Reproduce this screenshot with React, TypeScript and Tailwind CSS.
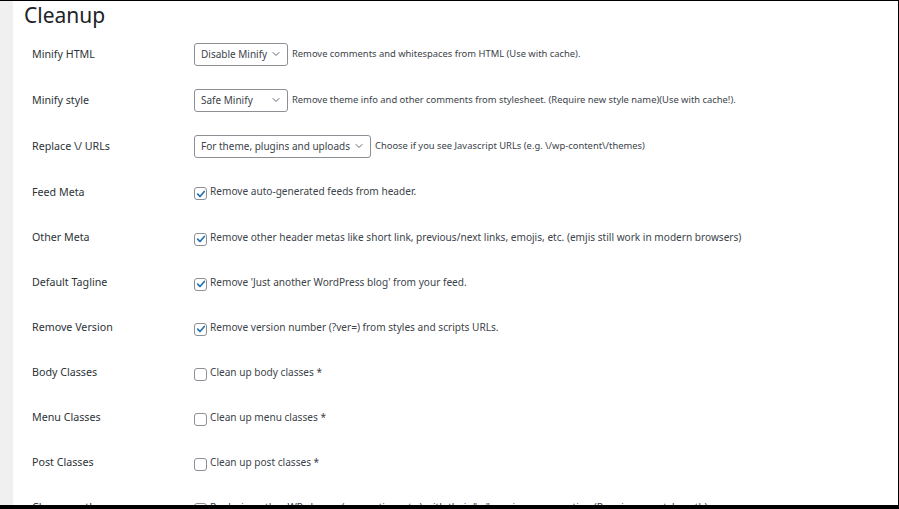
import { ChevronDown } from 'lucide-react';

type Row =
  | { label: string; kind: 'select'; value: string; width: string; desc: string }
  | { label: string; kind: 'check'; checked: boolean; desc: string };

const rows: Row[] = [
  { label: 'Minify HTML', kind: 'select', value: 'Disable Minify', width: 'w-[94px]', desc: 'Remove comments and whitespaces from HTML (Use with cache).' },
  { label: 'Minify style', kind: 'select', value: 'Safe Minify', width: 'w-[94px]', desc: 'Remove theme info and other comments from stylesheet. (Require new style name)(Use with cache!).' },
  { label: 'Replace \\/ URLs', kind: 'select', value: 'For theme, plugins and uploads', width: 'w-[177px]', desc: 'Choose if you see Javascript URLs (e.g. \\/wp-content\\/themes)' },
  { label: 'Feed Meta', kind: 'check', checked: true, desc: 'Remove auto-generated feeds from header.' },
  { label: 'Other Meta', kind: 'check', checked: true, desc: 'Remove other header metas like short link, previous/next links, emojis, etc. (emjis still work in modern browsers)' },
  { label: 'Default Tagline', kind: 'check', checked: true, desc: "Remove 'Just another WordPress blog' from your feed." },
  { label: 'Remove Version', kind: 'check', checked: true, desc: 'Remove version number (?ver=) from styles and scripts URLs.' },
  { label: 'Body Classes', kind: 'check', checked: false, desc: 'Clean up body classes *' },
  { label: 'Menu Classes', kind: 'check', checked: false, desc: 'Clean up menu classes *' },
  { label: 'Post Classes', kind: 'check', checked: false, desc: 'Clean up post classes *' },
  { label: 'Clean up other', kind: 'check', checked: false, desc: 'Replacing other WP classes (wp-caption, etc.) with their "x-" version e.g x-caption (Require new style path).' },
];

function Checkbox({ checked }: { checked: boolean }) {
  return (
    <span className="relative mt-[3px] flex h-[13px] w-[13px] shrink-0 items-center justify-center rounded-[3px] border border-[#8c8f94] bg-white">
      {checked && (
        <svg viewBox="0 0 12 12" className="h-[10px] w-[10px]">
          <path d="M2 6.2 L4.8 9 L10 3" fill="none" stroke="#2271b1" strokeWidth="2" strokeLinecap="round" strokeLinejoin="round" />
        </svg>
      )}
    </span>
  );
}

export default function App() {
  return (
    <div className="flex h-[509px] w-[899px] flex-col overflow-hidden border-t border-r border-black bg-white" style={{ fontFamily: '"Noto Sans", "Open Sans", Arial, sans-serif' }}>
      <div className="flex h-[504px] overflow-hidden">
        <div className="w-[13px] shrink-0 bg-[#f0f0f1]" />
        <div className="flex-1 pl-[11px]">
          <h1 className="h-[30px] pt-[1px] text-[21px] leading-[26px] text-[#1d2327]">Cleanup</h1>
          <div className="pl-[8px]">
            {rows.map((r, i) => (
              <div key={r.label} className={`grid ${i < 4 ? 'h-[46px]' : 'h-[45px]'} grid-cols-[162px_1fr] items-center`}>
                <div className="text-[10.7px] text-[#2c3338]">{r.label}</div>
                {r.kind === 'select' ? (
                  <div className="flex items-center gap-[4px]">
                    <div className={`flex h-[23px] ${r.width} items-center justify-between rounded-[3px] border border-[#8c8f94] bg-white pl-[6px] pr-[5px] text-[10px] text-[#3c434a]`}>
                      <span className="whitespace-nowrap">{r.value}</span>
                      <ChevronDown size={12} strokeWidth={1.8} className="shrink-0 text-[#50575e]" />
                    </div>
                    <span className="whitespace-nowrap text-[9.4px] text-[#3c434a]">{r.desc}</span>
                  </div>
                ) : (
                  <div className="flex items-start gap-[3px]">
                    <Checkbox checked={r.checked} />
                    <span className="whitespace-nowrap text-[10.1px] leading-[14px] text-[#3c434a]">{r.desc}</span>
                  </div>
                )}
              </div>
            ))}
          </div>
        </div>
      </div>
      <div className="h-[4px] shrink-0 bg-black" />
    </div>
  );
}
